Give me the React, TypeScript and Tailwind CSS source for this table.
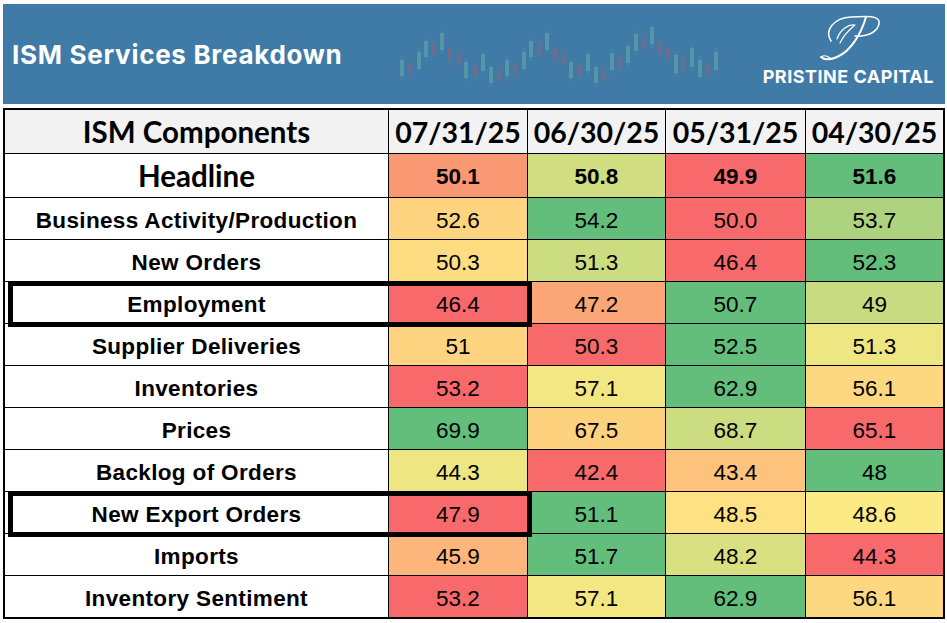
import React from "react";

type Row = { label: string; vals: string[]; bold?: boolean };

const rows: Row[] = [
  { label: "Headline", vals: ["50.1", "50.8", "49.9", "51.6"], bold: true },
  { label: "Business Activity/Production", vals: ["52.6", "54.2", "50.0", "53.7"] },
  { label: "New Orders", vals: ["50.3", "51.3", "46.4", "52.3"] },
  { label: "Employment", vals: ["46.4", "47.2", "50.7", "49"] },
  { label: "Supplier Deliveries", vals: ["51", "50.3", "52.5", "51.3"] },
  { label: "Inventories", vals: ["53.2", "57.1", "62.9", "56.1"] },
  { label: "Prices", vals: ["69.9", "67.5", "68.7", "65.1"] },
  { label: "Backlog of Orders", vals: ["44.3", "42.4", "43.4", "48"] },
  { label: "New Export Orders", vals: ["47.9", "51.1", "48.5", "48.6"] },
  { label: "Imports", vals: ["45.9", "51.7", "48.2", "44.3"] },
  { label: "Inventory Sentiment", vals: ["53.2", "57.1", "62.9", "56.1"] },
];

const MIN = [248, 105, 107];
const MID = [255, 235, 132];
const MAX = [99, 190, 123];

function mix(a: number[], b: number[], t: number) {
  const c = a.map((x, i) => Math.round(x + (b[i] - x) * t));
  return `rgb(${c[0]},${c[1]},${c[2]})`;
}

function colorFor(v: number, all: number[]) {
  const s = [...all].sort((a, b) => a - b);
  const mn = s[0];
  const mx = s[s.length - 1];
  const md = (s[1] + s[2]) / 2;
  if (v <= md) {
    const t = md === mn ? 1 : (v - mn) / (md - mn);
    return mix(MIN, MID, t);
  }
  const t = mx === md ? 1 : (v - md) / (mx - md);
  return mix(MID, MAX, t);
}

// candles: x, bodyTop, bodyBottom, teal?
const candles: [number, number, number, boolean][] = [
  [402, 60, 76, true],
  [410, 63, 74, false],
  [419, 52, 69, true],
  [426, 41, 57, true],
  [434, 43, 55, false],
  [442, 33, 50, true],
  [450, 48, 60, false],
  [459, 54, 65, false],
  [466, 62, 78, true],
  [475, 65, 77, false],
  [483, 54, 71, true],
  [491, 67, 83, true],
  [499, 70, 81, false],
  [507, 60, 76, true],
  [515, 63, 74, false],
  [524, 52, 69, true],
  [531, 41, 57, true],
  [539, 43, 55, false],
  [547, 33, 50, true],
  [555, 48, 60, false],
  [564, 54, 65, false],
  [571, 62, 78, true],
  [580, 65, 77, false],
  [588, 54, 71, true],
  [596, 67, 83, true],
  [604, 70, 81, false],
  [612, 53, 70, true],
  [620, 57, 68, false],
  [628, 46, 63, true],
  [636, 34, 51, true],
  [644, 38, 49, false],
  [652, 27, 44, true],
  [660, 42, 54, false],
  [668, 48, 59, false],
  [676, 55, 73, true],
  [683, 58, 70, false],
  [692, 48, 67, true],
  [700, 60, 77, true],
  [708, 63, 75, false],
  [716, 52, 70, true],
];

function Candles() {
  return (
    <svg width="330" height="100" viewBox="396 4 330 100" className="shrink-0">
      {candles.map(([x, t, b, teal], i) => {
        const c = teal ? "#5a9ca8" : "#786c89";
        return (
          <g key={i}>
            <line x1={x} x2={x} y1={t - 4} y2={b + 4} stroke={c} strokeWidth={1} opacity={0.5} />
            <rect x={x - 2} y={t} width={4} height={b - t} fill={c} opacity={0.8} />
          </g>
        );
      })}
    </svg>
  );
}

function ScriptP() {
  return (
    <svg width="100" height="60" viewBox="0 0 100 60" className="shrink-0">
      <g fill="none" stroke="#ffffff" strokeLinecap="round" strokeLinejoin="round">
        <path d="M33 36 C26 25 36 13 53 12 C68 11 83 10 81 19 C79 28 68 32 57 31" strokeWidth="1.5" />
        <path d="M68 12 C63 29 53 46 39 52 C33 55 26 55 23 52" strokeWidth="2" />
        <path d="M39 34 C42 25 50 19 57 20 C51 25 45 31 42 38" strokeWidth="1.2" />
        <path d="M23 52 C26 50 30 51 33 54" strokeWidth="1.1" />
      </g>
    </svg>
  );
}

export default function App() {
  const labelFont = "font-['Liberation_Sans',Arial,sans-serif]";
  const calibri = "font-['Lato','Carlito',sans-serif]";
  return (
    <div className="w-[947px] h-[623px] bg-white overflow-hidden pt-[4px] pl-[3px]">
      {/* Banner */}
      <div className="w-[942px] h-[100px] bg-[#3f7ba6] flex items-center">
        <div className="w-[393px] pl-[9px] pt-[1px] text-white font-bold text-[26px] tracking-[0.7px] font-['Inter',sans-serif] leading-none whitespace-nowrap">
          ISM Services Breakdown
        </div>
        <Candles />
        <div className="flex-1 self-stretch flex justify-end pr-[11px]">
          <div className="flex flex-col items-center pt-[1px]">
            <ScriptP />
            <div className="text-white font-bold text-[18px] tracking-[0.5px] leading-[20px] mt-[2px] font-['Inter',sans-serif] whitespace-nowrap">
              PRISTINE CAPITAL
            </div>
          </div>
        </div>
      </div>

      {/* Table */}
      <div className="relative mt-[4px] w-[942px]">
        <div className="grid grid-cols-[383px_138px_137px_139px_137px] grid-rows-[43px_43px_repeat(10,41px)] gap-px bg-black border-2 border-black">
          <div className={`bg-[#f2f2f2] flex items-center justify-center pt-[2px] text-black font-bold text-[29.5px] ${calibri}`}>
            ISM Components
          </div>
          {["07/31/25", "06/30/25", "05/31/25", "04/30/25"].map((d) => (
            <div
              key={d}
              className={`bg-[#f2f2f2] flex items-center justify-center pt-[2px] text-black font-bold text-[28.5px] ${calibri}`}
            >
              {d}
            </div>
          ))}
          {rows.map((r) => {
            const nums = r.vals.map((v) => parseFloat(v));
            return (
              <React.Fragment key={r.label}>
                <div
                  className={
                    r.bold
                      ? `bg-white flex items-center justify-center pt-[1px] text-black font-bold text-[29.5px] ${calibri}`
                      : `bg-white flex items-center justify-center pt-[4px] text-black font-bold text-[22.5px] tracking-[0.35px] ${labelFont}`
                  }
                >
                  {r.label}
                </div>
                {r.vals.map((v, i) => (
                  <div
                    key={i}
                    className={`flex items-center justify-center text-black text-[22.5px] ${labelFont} ${
                      r.bold ? "font-bold pt-[2px]" : "font-normal pt-[4px]"
                    }`}
                    style={{ backgroundColor: colorFor(nums[i], nums) }}
                  >
                    {v}
                  </div>
                ))}
              </React.Fragment>
            );
          })}
        </div>
        {/* highlight boxes */}
        <div className="absolute left-[5px] top-[173px] w-[524px] h-[46px] border-[5px] border-black pointer-events-none" />
        <div className="absolute left-[5px] top-[383px] w-[524px] h-[46px] border-[5px] border-black pointer-events-none" />
      </div>
    </div>
  );
}
